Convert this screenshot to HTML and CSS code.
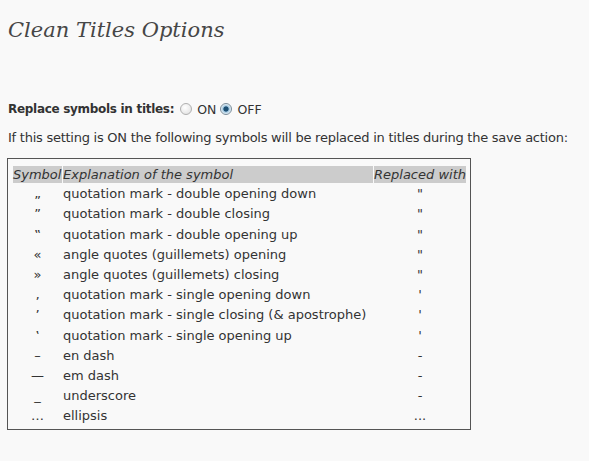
FILE: index.html
```html
<!DOCTYPE html>
<html>
<head>
<meta charset="utf-8">
<link rel="stylesheet" href="styles.css">
</head>
<body>
<div class="wrap">
  <h2 class="title">Clean Titles Options</h2>
  <div class="setting">
    <span class="label">Replace symbols in titles:</span>
    <span class="radio"></span><span class="opt">ON</span>
    <span class="radio checked"></span><span class="opt">OFF</span>
  </div>
  <p class="info">If this setting is ON the following symbols will be replaced in titles during the save action:</p>
  <table class="symbols">
    <thead>
      <tr><th class="c1">Symbol</th><th class="c2">Explanation of the symbol</th><th class="c3">Replaced with</th></tr>
    </thead>
    <tbody>
      <tr><td class="c1">„</td><td>quotation mark - double opening down</td><td class="c3">"</td></tr>
      <tr><td class="c1">”</td><td>quotation mark - double closing</td><td class="c3">"</td></tr>
      <tr><td class="c1">‟</td><td>quotation mark - double opening up</td><td class="c3">"</td></tr>
      <tr><td class="c1">«</td><td>angle quotes (guillemets) opening</td><td class="c3">"</td></tr>
      <tr><td class="c1">»</td><td>angle quotes (guillemets) closing</td><td class="c3">"</td></tr>
      <tr><td class="c1">‚</td><td>quotation mark - single opening down</td><td class="c3">'</td></tr>
      <tr><td class="c1">’</td><td>quotation mark - single closing (&amp; apostrophe)</td><td class="c3">'</td></tr>
      <tr><td class="c1">‛</td><td>quotation mark - single opening up</td><td class="c3">'</td></tr>
      <tr><td class="c1">–</td><td>en dash</td><td class="c3">-</td></tr>
      <tr><td class="c1">—</td><td>em dash</td><td class="c3">-</td></tr>
      <tr><td class="c1">_</td><td>underscore</td><td class="c3">-</td></tr>
      <tr><td class="c1">…</td><td>ellipsis</td><td class="c3">...</td></tr>
    </tbody>
  </table>
</div>
</body>
</html>
```
FILE: styles.css
```css
html, body {
  margin: 0;
  background: #f9f9f9;
}
body {
  font-family: "DejaVu Sans", Verdana, sans-serif;
  font-size: 13px;
  color: #333;
}
.wrap {
  padding: 0 8px;
}
.title {
  margin: 0;
  padding: 15px 0 0;
  height: 78px;
  font-family: "DejaVu Serif", Georgia, serif;
  font-style: italic;
  font-weight: normal;
  font-size: 21px;
  color: #464646;
  line-height: 30px;
}
.setting {
  margin-top: 7px;
  display: flex;
  align-items: center;
  height: 18px;
  font-size: 12px;
}
.label {
  font-weight: bold;
  margin-right: 5px;
  letter-spacing: -0.3px;
}
.radio {
  width: 12px;
  height: 12px;
  border-radius: 50%;
  border: 1px solid #b0b0b0;
  background: radial-gradient(circle at 40% 35%, #fff, #ddd);
  box-sizing: border-box;
  margin: 0 5px 0 1px;
}
.radio.checked {
  border-color: #7a8c99;
  background: radial-gradient(circle, #1d4f73 0 2.2px, #9dc4de 3px, #e8f2f8 5px);
}
.opt {
  margin-right: 3px;
  font-size: 12.5px;
}
.info {
  margin: 10px 0 0;
  line-height: 20px;
  letter-spacing: -0.25px;
}
.symbols {
  margin: 10px 0 0 -1px;
  border: 1px solid #555;
  border-spacing: 1px;
  padding: 6px 3px 2px 4px;
  line-height: 17.2px;
}
.symbols th {
  background: #ccc;
  font-weight: normal;
  font-style: italic;
  text-align: left;
  padding: 0;
  color: #333;
}
.symbols td {
  padding: 1px 0;
}
.c1 {
  width: 49px;
  text-align: center;
}
.symbols th.c1 {
  text-align: left;
}
.c2 {
  width: 310px;
}
.symbols td.c3 {
  text-align: center;
}
```
